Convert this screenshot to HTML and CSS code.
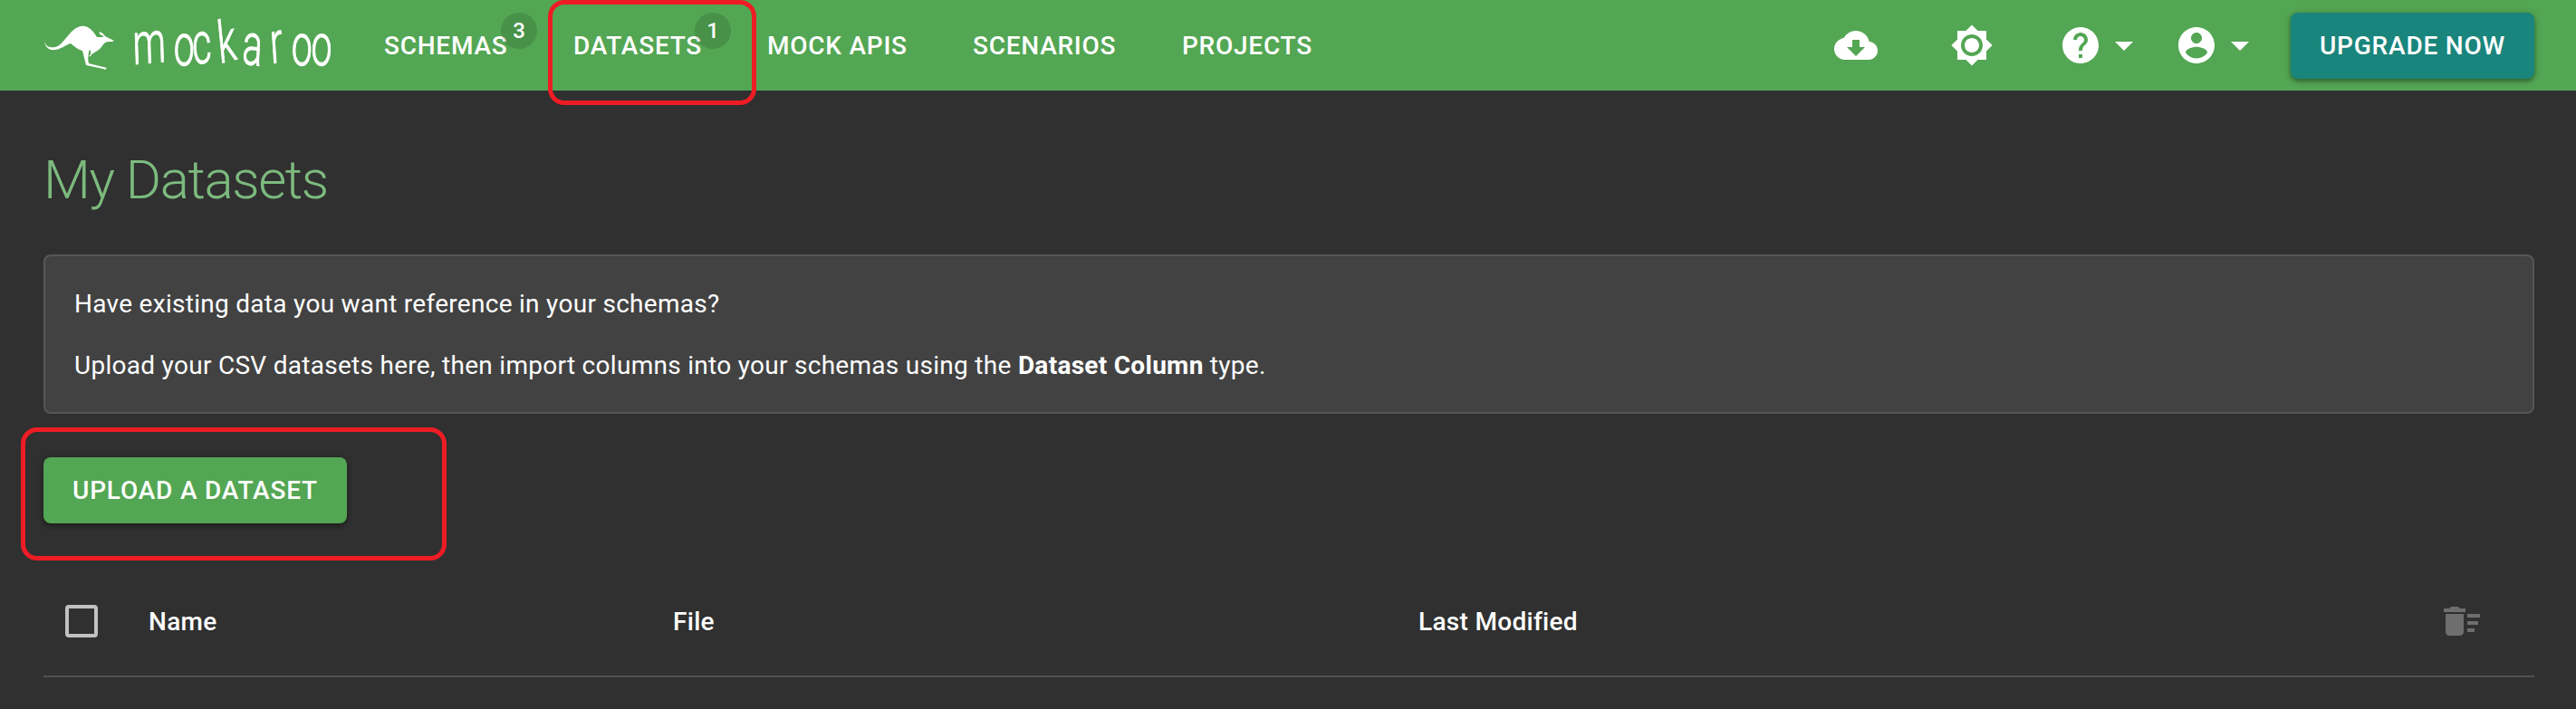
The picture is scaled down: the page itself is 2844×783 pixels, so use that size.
FILE: index.html
```html
<!DOCTYPE html>
<html lang="en">
<head>
<meta charset="utf-8">
<title>Mockaroo - My Datasets</title>
<link rel="stylesheet" href="styles.css">
</head>
<body>
<header class="bar">
  <svg class="logo" width="328" height="100" viewBox="0 0 328 100" role="img" aria-label="mockaroo">
    <path fill="#fff" d="M1 46C3 52 8 53 13 52C22 50 27 35 38 30C48 26 54 33 59 41L65 41L67 40C63 39 61 37 62 35C65 36 67 38 68 40L78 45C77 46 75 46 72 46C68 46 66 49 64 52C61 56 57 57 55 59C52 60 53 63 50 62L52 60V57C52 54 50 55 50 58C49 63 49 67 50 70L70 75L68 77L66 76L47 72L43 56C38 55 34 51 30 48C24 50 20 54 13 55C6 56 2 52 1 46Z"/>
    <g transform="scale(.64 1)"><text class="wordmark" y="71 71 71 70 70 70 71 71" x="155 224 258 304 342 393 427 461" rotate="-3 3 -4 -9 5 -6 3 3">mockaroo</text></g>
  </svg>
  <nav class="nav">
    <a class="tab">SCHEMAS<span class="count">3</span></a>
    <a class="tab tab-datasets">DATASETS<span class="count">1</span><i class="mark mark-nav"></i></a>
    <a class="tab tab-apis">MOCK APIS</a>
    <a class="tab tab-scenarios">SCENARIOS</a>
    <a class="tab tab-projects">PROJECTS</a>
  </nav>
  <div class="tools">
    <svg class="icon" viewBox="0 0 24 24"><path d="M19.35 10.04C18.67 6.59 15.64 4 12 4 9.11 4 6.6 5.64 5.35 8.04 2.34 8.36 0 10.91 0 14c0 3.31 2.69 6 6 6h13c2.76 0 5-2.24 5-5 0-2.64-2.05-4.78-4.65-4.96zM17 13l-5 5-5-5h3V9h4v4h3z"/></svg>
    <svg class="icon icon-sun" viewBox="0 0 24 24"><path d="M20 8.69V4h-4.69L12 .69 8.69 4H4v4.69L.69 12 4 15.31V20h4.69L12 23.31 15.31 20H20v-4.69L23.31 12 20 8.69zM12 18c-3.31 0-6-2.69-6-6s2.69-6 6-6 6 2.69 6 6-2.69 6-6 6zm0-10c-2.21 0-4 1.79-4 4s1.79 4 4 4 4-1.79 4-4-1.79-4-4-4z"/></svg>
    <div class="menu">
      <svg class="icon" viewBox="0 0 24 24"><path d="M12 2C6.48 2 2 6.48 2 12s4.48 10 10 10 10-4.48 10-10S17.52 2 12 2zm1 17h-2v-2h2v2zm2.07-7.75l-.9.92C13.45 12.9 13 13.5 13 15h-2v-.5c0-1.1.45-2.1 1.17-2.83l1.24-1.26c.37-.36.59-.86.59-1.41 0-1.1-.9-2-2-2s-2 .9-2 2H8c0-2.21 1.79-4 4-4s4 1.79 4 4c0 .88-.36 1.68-.93 2.25z"/></svg>
      <svg class="icon" viewBox="0 0 24 24"><path d="M7 10l5 5 5-5z"/></svg>
    </div>
    <div class="menu">
      <svg class="icon" viewBox="0 0 24 24"><path d="M12 2C6.48 2 2 6.48 2 12s4.48 10 10 10 10-4.48 10-10S17.52 2 12 2zm0 3c1.66 0 3 1.34 3 3s-1.34 3-3 3-3-1.34-3-3 1.34-3 3-3zm0 14.2c-2.5 0-4.71-1.28-6-3.22.03-1.99 4-3.08 6-3.08 1.99 0 5.97 1.09 6 3.08-1.29 1.94-3.5 3.22-6 3.22z"/></svg>
      <svg class="icon" viewBox="0 0 24 24"><path d="M7 10l5 5 5-5z"/></svg>
    </div>
    <button class="button upgrade">UPGRADE NOW</button>
  </div>
</header>
<main class="page">
  <h1 class="title">My Datasets</h1>
  <section class="panel">
    <p>Have existing data you want reference in your schemas?</p>
    <p>Upload your CSV datasets here, then import columns into your schemas using the <b>Dataset Column</b> type.</p>
  </section>
  <div class="actions"><button class="button upload">UPLOAD A DATASET</button><i class="mark mark-upload"></i></div>
  <div class="table-head">
    <span class="checkbox"></span>
    <span class="column">Name</span>
    <span class="column">File</span>
    <span class="column">Last Modified</span>
    <svg class="icon sweep" viewBox="0 0 24 24"><path d="M15 16h4v2h-4zM15 8h7v2h-7zM15 12h6v2h-6zM3 18c0 1.1.9 2 2 2h6c1.1 0 2-.9 2-2V8H3v10zM14 5h-3l-1-1H6L5 5H2v2h12V5z"/></svg>
  </div>
</main>
</body>
</html>
```

FILE: styles.css
```css
* { box-sizing: border-box; }
body {
  margin: 0;
  height: 783px;
  overflow: hidden;
  background: #303030;
  color: #fff;
  font: 400 28px/40px Roboto, sans-serif;
}
.bar {
  height: 100px;
  padding: 0 46px 0 48px;
  display: flex;
  align-items: center;
  background: #53a653;
}
.logo { flex: none; }
.wordmark { font: 300 64px Roboto, sans-serif; fill: #fff; stroke: #fff; stroke-width: 1.2px; }
.nav { display: flex; margin-left: 48px; padding-top: 2px; font-weight: 500; letter-spacing: .75px; }
.tab { position: relative; white-space: nowrap; width: 209px; }
.tab-datasets { width: 214px; }
.tab-apis { width: 227px; }
.tab-scenarios { width: 231px; }
.count {
  position: absolute;
  left: 129px;
  top: -17px;
  width: 40px;
  height: 40px;
  border-radius: 50%;
  background: rgba(0, 0, 0, .12);
  font-size: 24px;
  line-height: 40px;
  text-align: center;
  letter-spacing: 0;
}
.tab-datasets .count { left: 134px; }
.mark { position: absolute; border: 5px solid #ee1c24; border-radius: 18px; }
.mark-nav { left: -28px; top: -31px; width: 230px; height: 116px; }
.mark-upload { left: -25px; top: -33px; width: 470px; height: 147px; }
.tools { display: flex; align-items: center; margin-left: auto; }
.icon { display: block; width: 48px; height: 48px; fill: #fff; }
.icon-sun { margin: 0 72px 0 80px; }
.menu { display: flex; margin-right: 32px; }
.button {
  height: 73px;
  border: 0;
  border-radius: 8px;
  color: #fff;
  font: 500 28px/73px Roboto, sans-serif;
  letter-spacing: .8px;
  padding: 0;
  white-space: nowrap;
  box-shadow: 0 3px 5px rgba(0, 0, 0, .3), 0 1px 8px rgba(0, 0, 0, .18);
}
.upgrade { width: 269px; background: #1a857c; }
.upload { width: 335px; background: #53a653; }
.page { padding: 64px 46px 0 48px; }
.title { margin: 0; height: 117px; font-size: 60px; line-height: 70px; font-weight: 300; color: #7cba7e; letter-spacing: -1.4px; }
.panel { height: 176px; border: 2px solid #565656; border-radius: 8px; background: #424242; padding: 33px 32px; letter-spacing: .285px; }
.panel p { margin: 0 0 28px; }
.actions { position: relative; display: flex; margin-top: 48px; }
.table-head {
  display: grid;
  grid-template-columns: 92px 579px 823px 1fr 48px;
  align-items: center;
  margin-top: 48px;
  height: 122px;
  padding: 2px 56px 2px 24px;
  border-bottom: 2px solid #515151;
  font-weight: 500;
  letter-spacing: .3px;
}
.column { padding-top: 2px; }
.checkbox { width: 36px; height: 36px; border: 4px solid #c1c1c1; border-radius: 4px; }
.sweep { fill: #6e6e6e; }
```
